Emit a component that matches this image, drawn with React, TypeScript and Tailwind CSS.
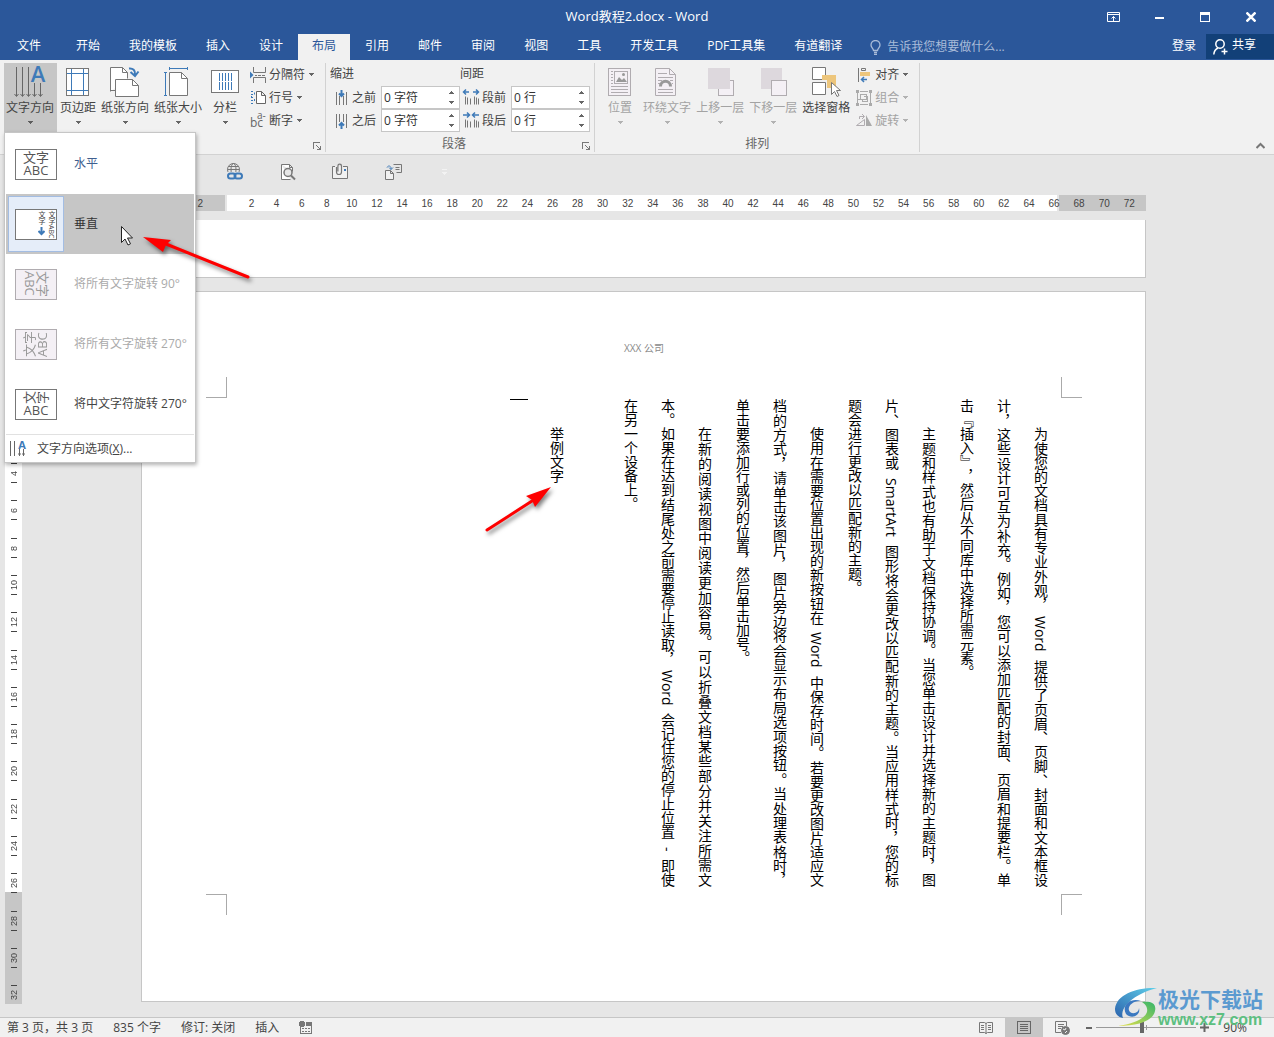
import type { ReactNode } from "react";

const BLUE = "#3e7ab8";

const tabs = ["开始", "我的模板", "插入", "设计", "布局", "引用", "邮件", "审阅", "视图", "工具", "开发工具", "PDF工具集", "有道翻译"];

const paragraphs = [
  "为使您的文档具有专业外观，Word 提供了页眉、页脚、封面和文本框设计，这些设计可互为补充。例如，您可以添加匹配的封面、页眉和提要栏。单击『插入』，然后从不同库中选择所需元素。",
  "主题和样式也有助于文档保持协调。当您单击设计并选择新的主题时，图片、图表或 SmartArt 图形将会更改以匹配新的主题。当应用样式时，您的标题会进行更改以匹配新的主题。",
  "使用在需要位置出现的新按钮在 Word 中保存时间。若要更改图片适应文档的方式，请单击该图片，图片旁边将会显示布局选项按钮。当处理表格时，单击要添加行或列的位置，然后单击加号。",
  "在新的阅读视图中阅读更加容易。可以折叠文档某些部分并关注所需文本。如果在达到结尾处之前需要停止读取，Word 会记住您的停止位置 - 即使在另一个设备上。",
];

const horizontalMarks = Array.from({ length: 36 }, (_, i) => (i + 1) * 2);
const verticalMarks = Array.from({ length: 16 }, (_, i) => (i + 1) * 2);

function Caret({ className = "" }: { className?: string }) {
  return (
    <svg width="5" height="3" viewBox="0 0 5 3" className={className} shapeRendering="crispEdges">
      <path d="M0 0h5v1H4v1H3v1H2V2H1V1H0z" fill="currentColor" />
    </svg>
  );
}

function BigButton({ label, icon, disabled, active, caret = true }: {
  label: string;
  icon: ReactNode;
  disabled?: boolean;
  active?: boolean;
  caret?: boolean;
}) {
  return (
    <button
      disabled={disabled}
      className={`flex h-[69px] min-w-10 flex-col items-center pt-[3px] pl-[2px] ${active ? "bg-[#c6c6c6] pr-[3px]" : "pr-[2px]"} ${disabled ? "text-[#a3a3a3]" : "text-[#444]"}`}
    >
      {icon}
      <span className="pt-px leading-[18px] whitespace-nowrap">{label}</span>
      {caret && <Caret className="mt-1 opacity-80" />}
    </button>
  );
}

function SmallButton({ label, icon, disabled }: { label: string; icon: ReactNode; disabled?: boolean }) {
  return (
    <button disabled={disabled} className={`flex h-[23px] items-center gap-[3px] ${disabled ? "text-[#a3a3a3]" : "text-[#444]"}`}>
      {icon}
      <span>{label}</span>
      <Caret className="ml-px opacity-80" />
    </button>
  );
}

function Group({ label, launcher, children }: { label: string; launcher?: boolean; children: ReactNode }) {
  return (
    <section className="mt-[3px] mb-[2px] flex flex-col border-r border-[#d2d2d2]">
      <div className="flex h-[69px]">{children}</div>
      <div className="flex h-5 items-end text-[#666]">
        <span className="flex-1 text-center leading-4">{label}</span>
        {launcher && (
          <button aria-label={`${label}设置`} className="h-3 w-3">
            <svg width="9" height="9" viewBox="0 0 9 9" fill="none" stroke="#777" shapeRendering="crispEdges">
              <path d="M.5 7V.5H7M3 3l4 4M7.500 4v3.500H4" />
            </svg>
          </button>
        )}
      </div>
    </section>
  );
}

function Spinner({ id, label, value, icon }: { id: string; label: string; value: string; icon: ReactNode }) {
  return (
    <div className="flex h-[23px] items-center">
      {icon}
      <label htmlFor={id} className="mr-[5px] whitespace-nowrap">{label}</label>
      <div className="flex h-[23px] w-[79px] border border-[#c6c6c6] bg-white">
        <input id={id} defaultValue={value} className="w-0 flex-1 bg-transparent pl-[2px] text-[#333] outline-none" />
        <div className="flex w-[15px] flex-col text-[#666]">
          <button aria-label={`${label}增加`} className="flex flex-1 items-center justify-center">
            <Caret className="rotate-180" />
          </button>
          <button aria-label={`${label}减少`} className="flex flex-1 items-center justify-center">
            <Caret />
          </button>
        </div>
      </div>
    </div>
  );
}

/* Ribbon icons */

const TextDirectionIcon = () => (
  <svg width="32" height="32" viewBox="0 0 32 32" fill="none" stroke="#666" className="overflow-visible">
    <path d="M2.500 1v29M8.500 1v29M14.500 1v29M20.500 17v13M26.500 17v13" />
    <path d="M.5 28l2 2.500 2-2.500M6.500 28l2 2.500 2-2.500M12.500 28l2 2.500 2-2.500M18.500 28l2 2.500 2-2.500M24.500 28l2 2.500 2-2.500" />
    <text x="24" y="16" textAnchor="middle" fontSize="22" fontWeight="600" fill={BLUE} stroke="none">A</text>
  </svg>
);

const MarginsIcon = () => (
  <svg width="32" height="32" viewBox="0 0 32 32" fill="none" shapeRendering="crispEdges">
    <rect x="4.500" y="2.500" width="22" height="27" fill="#fff" stroke="#777" />
    <path d="M9.500 3v26M21.500 3v26M5 7.500h21M5 24.500h21" stroke={BLUE} />
  </svg>
);

const OrientationIcon = () => (
  <svg width="32" height="32" viewBox="0 0 32 32" fill="#fff" stroke="#777">
    <path d="M1.500 25.500v-24h12l5 5v6M1.500 24.500h5" />
    <path d="M13.500 1.500v5h5" fill="none" />
    <path d="M6.500 13.500h17l6 6v11h-23z" />
    <path d="M23.500 13.500v6h6" fill="none" />
    <path d="M20 2.500c4-.5 6.500 2 6 6M21.500 6l4.500 4 3.500-4.500" fill="none" stroke={BLUE} strokeWidth="2" />
  </svg>
);

const SizeIcon = () => (
  <svg width="32" height="32" viewBox="0 0 32 32" fill="none" stroke="#777">
    <path d="M7.500 6.500h12l6 6v17h-18z" fill="#fff" />
    <path d="M19.500 6.500v6h6" />
    <path d="M7 2.500h18.500M7.500 1v3M25.500 1v3M3.500 6v23M2 6.500h3M2 29.500h3" stroke={BLUE} />
  </svg>
);

const ColumnsIcon = () => (
  <svg width="32" height="32" viewBox="0 0 32 32" fill="none" shapeRendering="crispEdges">
    <rect x="2.500" y="4.500" width="27" height="22" fill="#fff" stroke="#777" />
    <path d="M10.500 7v17M13.500 7v17M16.500 7v17M19.500 7v17M22.500 7v17" stroke={BLUE} strokeDasharray="8 1" />
  </svg>
);

const BreaksIcon = () => (
  <svg width="16" height="16" viewBox="0 0 16 16" fill="none" stroke="#777">
    <path d="M3.500 0v5.500h12V0M3.500 16v-5.500h12V16M5 8.500h2M8 8.500h3M12 8.500h3" />
    <path d="M0 4.500L3.500 8 0 11.500z" fill={BLUE} stroke="none" />
  </svg>
);

const LineNumberIcon = () => (
  <svg width="16" height="16" viewBox="0 0 16 16" fill="none" stroke="#666">
    <path d="M6.500 1.500h5l4 4v8h-9zM11.500 1.500v4h4" fill="#fff" />
    <path d="M1 1.500h2M1 4.500h3M1 7.500h3M1 10.500h3M1 13.500h3M4.500 2.500v2M1.500 6v2M4.500 9v2" stroke={BLUE} strokeDasharray="2 1" />
  </svg>
);

const HyphenIcon = () => (
  <svg width="16" height="16" viewBox="0 0 16 16" fill="#666" className="overflow-visible">
    <text x="0" y="14" fontSize="12">bc</text>
    <text x="7" y="6" fontSize="10">a-</text>
  </svg>
);

const IndentIcon = ({ up }: { up?: boolean }) => (
  <svg width="11" height="16" viewBox="0 0 11 16" fill="none" stroke="#777" className="mr-[5px] overflow-visible">
    <path d={up ? "M.5 1v14M3.500 1v8M7.500 1v8M10.500 1v14" : "M.5 2v13M3.500 6v9M7.500 6v9M10.500 2v13"} />
    <path d={up ? "M5.500 16v-6M3 12.500L5.500 10 8 12.500" : "M5.500 0v6M3 3.500L5.500 6 8 3.500"} stroke={BLUE} strokeWidth="2" />
  </svg>
);

const SpacingIcon = ({ inward }: { inward?: boolean }) => (
  <svg width="16" height="16" viewBox="0 1.500 16 16" fill="none" stroke="#777" className="mr-[3px] ml-[3px] overflow-visible">
    <path d="M2.500 8v8M4.500 9v7M7.500 10v6M11.500 8v8M13.500 9v7M15.500 10v6" />
    <path
      d={inward ? "M0 3.500h6M4 1l2.500 2.500L4 6M16 3.500h-6M12 1L9.500 3.500 12 6" : "M.5 3.500H6M3 1L.5 3.500 3 6M10 3.500h5.500M13 1l2.500 2.500L13 6"}
      stroke={BLUE}
      strokeWidth="1.500"
    />
  </svg>
);

const PositionIcon = () => (
  <svg width="32" height="32" viewBox="0 0 32 32" fill="none" stroke="#b0acb0">
    <rect x="4.500" y="2.500" width="22" height="27" fill="#f4f0f5" />
    <rect x="10.500" y="5.500" width="13" height="12" />
    <path d="M12 16l3-5 3 3 2-2 3 4z" fill="#999" stroke="none" />
    <circle cx="19.500" cy="8.500" r="1.500" fill="#999" stroke="none" />
    <path d="M7 5.500h2M7 8.500h2M7 11.500h2M7 14.500h2M7 17.500h2M7 20.500h17M7 23.500h17M7 26.500h17" />
  </svg>
);

const WrapIcon = () => (
  <svg width="32" height="32" viewBox="0 0 32 32" fill="none" stroke="#b0acb0">
    <path d="M4.500 2.500h14l6 6v21h-20z" fill="#f4f0f5" />
    <path d="M18.500 2.500v6h6M7 7.500h9M7 11.500h15M7 14.500h4M7 17.500h2M19 14.500h3M21 17.500h1M7 23.500h15M7 26.500h15" />
    <path d="M9.500 20.500c0-7 10-7 10 0" stroke="#999" strokeWidth="3" />
  </svg>
);

const ForwardIcon = () => (
  <svg width="32" height="32" viewBox="0 0 32 32">
    <rect x="14.500" y="14.500" width="15" height="15" fill="#f4f0f5" stroke="#b0acb0" />
    <path d="M4 2h22v21H4z" fill="#ddd8dd" />
  </svg>
);

const BackwardIcon = () => (
  <svg width="32" height="32" viewBox="0 0 32 32">
    <path d="M4 2h21v21H4z" fill="#ddd8dd" />
    <rect x="14.500" y="14.500" width="15" height="15" fill="#f4f0f5" stroke="#b0acb0" />
  </svg>
);

const SelectionIcon = () => (
  <svg width="32" height="32" viewBox="0 0 32 32" fill="#fff" stroke="#777">
    <path d="M12 9h14v13h-9v-8h-5z" fill="#edc67c" stroke="none" />
    <path d="M2.500 1.500h13v12h-13zM2.500 16.500h13v12h-13z" />
    <path d="M12 9h14v5H12z" fill="#edc67c" stroke="none" />
    <path d="M21.500 16.500v12l3-3 2.500 5 2-1-2.500-5h4z" />
  </svg>
);

const AlignIcon = () => (
  <svg width="16" height="16" viewBox="0 0 16 16" fill="none" stroke="#777">
    <path d="M2.500 1v14M5.500 1.500h4v2h-4z" />
    <path d="M4 5h10v4H4z" fill="#edc67c" stroke="none" />
    <path d="M5 12.500h6M8 10l-2.500 2.500L8 15" stroke={BLUE} strokeWidth="1.500" />
  </svg>
);

const GroupIcon = () => (
  <svg width="16" height="16" viewBox="0 0 16 16" fill="none" stroke="#aaa" shapeRendering="crispEdges">
    <path d="M1.500 3v10M14.500 3v10M4 1.500h8M4 14.500h8M1.500 9.500h3M4.500 4.500h6v5h-6zM7.500 6.500h4v5h-5v-2" />
    <path d="M0 0h3v3H0zM13 0h3v3h-3zM0 13h3v3H0zM13 13h3v3h-3z" fill="#aaa" stroke="none" />
  </svg>
);

const RotateIcon = () => (
  <svg width="16" height="16" viewBox="0 0 16 16" fill="none" stroke="#b0acb0">
    <path d="M10 2v11h6z" fill="#aaa" stroke="none" />
    <path d="M.5 12.500h8v-6zM3.500 6V3.500H8M6 1l2.500 2.500L6 6" />
  </svg>
);

/* Quick access toolbar */
const quickTools = [
  {
    name: "超链接",
    icon: (
      <>
        <circle cx="7.500" cy="6.500" r="6" />
        <ellipse cx="7.500" cy="6.500" rx="2.500" ry="6" />
        <path d="M1.500 6.500h12M2.500 3.500h10M2.500 9.500h10" />
        <rect x="1" y="9" width="16" height="9" fill="#e6e6e6" stroke="none" />
        <rect x="2" y="10.500" width="7.500" height="5" rx="2.500" stroke={BLUE} strokeWidth="2" />
        <rect x="8.500" y="10.500" width="7.500" height="5" rx="2.500" stroke={BLUE} strokeWidth="2" />
      </>
    ),
  },
  {
    name: "打印预览",
    icon: (
      <>
        <path d="M2.500 1.500h8l3 3v4M2.500 1.500v15h9M10.500 1.500v3h3" fill="#fff" />
        <circle cx="9" cy="9.500" r="4" fill="#e6e6e6" strokeWidth="1.500" />
        <path d="M12 12.500l4 4" strokeWidth="2" />
      </>
    ),
  },
  {
    name: "附件",
    icon: (
      <>
        <path d="M3 3.500H.5v12h15v-12H11" fill="#f1f1f1" />
        <path d="M4.500 4v5a2.500 2.500 0 0 0 5 0V3a1.800 1.800 0 0 0-3.600 0v5.500" strokeWidth="1.200" />
        <path d="M12 6h2v2h-2z" fill={BLUE} stroke="none" />
      </>
    ),
  },
  {
    name: "粘贴",
    icon: (
      <>
        <path d="M8.500 1.500h8v8h-5M10.500 4.500h4M10.500 6.500h4" />
        <path d="M.5 7.500h5l3 3v6h-8zM5.500 7.500v3h3" fill="#f1f1f1" />
        <path d="M2 4.500c1-2 3-2 4 0v2M4 4.500l2 2 2-2" stroke={BLUE} />
      </>
    ),
  },
];

const previewBox = "flex h-[31px] w-[42px] shrink-0 items-center justify-center border leading-[13px] text-[13px]";

const directions = [
  {
    label: "水平",
    tone: "text-[#3f5f8f]",
    preview: (
      <span className={`${previewBox} flex-col border-[#777] bg-white text-[#555]`}>
        <span>文字</span>
        <span>ABC</span>
      </span>
    ),
  },
  {
    label: "垂直",
    tone: "text-[#333]",
    selected: true,
    preview: (
      <span className="flex h-[31px] w-[42px] shrink-0 justify-end gap-[3px] border border-[#777] bg-white pt-px pr-px text-[7px] leading-[7px] text-[#444]">
        <span className="flex flex-col items-center">
          <span className="[writing-mode:vertical-rl]">文字</span>
          <svg width="7" height="9" viewBox="0 0 7 9" fill="none" stroke={BLUE} strokeWidth="2" className="mt-[2px]">
            <path d="M3.500 0v7M.5 4l3 3 3-3" />
          </svg>
        </span>
        <span className="[writing-mode:vertical-rl]">文字ABC</span>
      </span>
    ),
  },
  {
    label: "将所有文字旋转 90°",
    tone: "text-[#aaa]",
    disabled: true,
    preview: (
      <span className={`${previewBox} border-[#b0acb0] bg-[#f4f0f5] text-[#999]`}>
        <span className="[text-orientation:sideways] [writing-mode:vertical-rl]">文字<br />ABC</span>
      </span>
    ),
  },
  {
    label: "将所有文字旋转 270°",
    tone: "text-[#aaa]",
    disabled: true,
    preview: (
      <span className={`${previewBox} border-[#b0acb0] bg-[#f4f0f5] text-[#999]`}>
        <span className="rotate-180 [text-orientation:sideways] [writing-mode:vertical-rl]">文字<br />ABC</span>
      </span>
    ),
  },
  {
    label: "将中文字符旋转 270°",
    tone: "text-[#444]",
    preview: (
      <span className={`${previewBox} flex-col border-[#777] bg-white text-[#555]`}>
        <span className="flex">
          <span className="-rotate-90">文</span>
          <span className="-rotate-90">字</span>
        </span>
        <span>ABC</span>
      </span>
    ),
  },
];

function DirectionMenu() {
  return (
    <div className="absolute top-[132px] left-1 z-10 w-[192px] border border-[#c6c6c6] bg-white pt-px shadow-[1px_2px_4px_rgba(0,0,0,0.3)]">
      {directions.map((d) => (
        <button
          key={d.label}
          disabled={d.disabled}
          className={`mx-px flex h-[60px] w-[188px] items-center text-left ${d.tone} ${d.selected ? "bg-[#c6c6c6]" : ""}`}
        >
          <span
            className={`ml-[2px] flex h-14 w-14 items-center justify-center border ${d.selected ? "border-[#a3bde3] bg-[#e5edf9]" : "border-transparent"}`}
          >
            {d.preview}
          </span>
          <span className="ml-[10px] whitespace-nowrap">{d.label}</span>
        </button>
      ))}
      <button className="mx-px flex h-[28px] w-[188px] items-center border-t border-[#e1e1e1] text-[#444]">
        <svg width="16" height="17" viewBox="0 0 16 17" fill="none" stroke="#666" className="ml-1 overflow-visible">
          <path d="M.5 1v15M4.500 1v15M9.500 9v7M13.500 9v7M8 14h3M12 14h3" />
          <text x="12" y="8.500" textAnchor="middle" fontSize="11" fontWeight="700" fill={BLUE} stroke="none">A</text>
        </svg>
        <span className="ml-[11px]">文字方向选项(<u>X</u>)...</span>
      </button>

      {/* Pointer and the arrow calling out the vertical option */}
      <svg width="14" height="20" viewBox="0 0 14 20" className="absolute top-[93px] left-[116px]">
        <path d="M.5.5v16l3.500-3.500 3 6 2.500-1.200-3-5.800h5z" fill="#fff" stroke="#222" />
      </svg>
      <svg width="120" height="60" viewBox="0 0 120 60" className="absolute top-[98px] left-[135px] drop-shadow-[2px_3px_2px_rgba(0,0,0,0.5)]">
        <path d="M26 13L108 46" stroke="#fe0000" strokeWidth="3" strokeLinecap="round" />
        <path d="M3 6l28 3-5 5-3 7z" fill="#fe0000" />
      </svg>
    </div>
  );
}

function Ribbon() {
  return (
    <div className="flex border-b border-[#d2d2d2] bg-[#f1f1f1] pl-1 text-[#444]">
      <Group label="" launcher>
        <div className="flex gap-px">
          <BigButton label="文字方向" icon={<TextDirectionIcon />} active />
          <BigButton label="页边距" icon={<MarginsIcon />} />
          <BigButton label="纸张方向" icon={<OrientationIcon />} />
          <BigButton label="纸张大小" icon={<SizeIcon />} />
          <BigButton label="分栏" icon={<ColumnsIcon />} />
        </div>
        <div className="mr-[11px] ml-[5px] flex flex-col">
          <SmallButton label="分隔符" icon={<BreaksIcon />} />
          <SmallButton label="行号" icon={<LineNumberIcon />} />
          <SmallButton label="断字" icon={<HyphenIcon />} />
        </div>
      </Group>

      <Group label="段落" launcher>
        <div className="ml-1 flex flex-col">
          <h2 className="h-[23px] leading-[21px]">缩进</h2>
          <div className="pl-[6px]">
            <Spinner id="indent-left" label="之前" value="0 字符" icon={<IndentIcon />} />
            <Spinner id="indent-right" label="之后" value="0 字符" icon={<IndentIcon up />} />
          </div>
        </div>
        <div className="mr-1 flex flex-col">
          <h2 className="h-[23px] leading-[21px]">间距</h2>
          <Spinner id="space-before" label="段前" value="0 行" icon={<SpacingIcon />} />
          <Spinner id="space-after" label="段后" value="0 行" icon={<SpacingIcon inward />} />
        </div>
      </Group>

      <Group label="排列">
        <div className="ml-[5px] flex gap-px">
          <BigButton label="位置" icon={<PositionIcon />} disabled />
          <BigButton label="环绕文字" icon={<WrapIcon />} disabled />
          <BigButton label="上移一层" icon={<ForwardIcon />} disabled />
          <BigButton label="下移一层" icon={<BackwardIcon />} disabled />
          <BigButton label="选择窗格" icon={<SelectionIcon />} caret={false} />
        </div>
        <div className="mr-[11px] ml-1 flex flex-col">
          <SmallButton label="对齐" icon={<AlignIcon />} />
          <SmallButton label="组合" icon={<GroupIcon />} disabled />
          <SmallButton label="旋转" icon={<RotateIcon />} disabled />
        </div>
      </Group>

      <button aria-label="折叠功能区" className="mr-[9px] mb-1 ml-auto self-end">
        <svg width="9" height="8" viewBox="0 0 9 8" fill="none" stroke="#777" strokeWidth="2">
          <path d="M.5 6L4.500 2l4 4" />
        </svg>
      </button>
    </div>
  );
}

// Latin words get extra room on both sides, as in East Asian typesetting
function MixedText({ text }: { text: string }) {
  return (
    <>
      {text.split(/([A-Za-z]+|-)/).map((part, i) =>
        i % 2 ? <span key={i} className="mx-1">{part}</span> : part
      )}
    </>
  );
}

function Page() {
  return (
    <article className="relative mt-[13px] flex flex-col border border-[#c6c6c6] bg-white pr-[63px] pb-[86px] pl-16">
      <header className="flex h-[85px] items-center justify-center pt-[28px] text-[10px] text-[#8a8a8a]">XXX 公司</header>
      <div className="flex h-[21px] justify-between">
        <span className="w-[21px] border-r border-b border-[#aaa]" />
        <span className="w-[21px] border-b border-l border-[#aaa]" />
      </div>
      <div className="mr-[23px] ml-[22px] flex h-[496px] flex-col pt-px">
        <div className="flex h-[488px] w-full flex-col gap-px text-justify text-[14px] leading-[37px] text-black [text-spacing-trim:space-all] [writing-mode:vertical-rl]">
          {paragraphs.map((p) => (
            <p key={p} className="h-[488px] indent-[28px]"><MixedText text={p} /></p>
          ))}
          <p className="w-[35px]" />
          <p className="indent-[28px]">举例文字</p>
          <p className="w-[37px] pr-[9px] pl-[9px]">
            <span className="block h-px w-[18px] bg-black" />
          </p>
        </div>
      </div>
      <div className="flex h-[21px] justify-between">
        <span className="w-[21px] border-t border-r border-[#aaa]" />
        <span className="w-[21px] border-t border-l border-[#aaa]" />
      </div>

      {/* Arrow calling out the sample text */}
      <svg width="76" height="56" viewBox="0 0 76 56" className="absolute top-[193px] left-[342px] drop-shadow-[2px_3px_2px_rgba(0,0,0,0.5)]">
        <path d="M3 45L48 16" stroke="#fe0000" strokeWidth="3" strokeLinecap="round" />
        <path d="M67 2L42 11l6 4 3 7z" fill="#fe0000" />
      </svg>
    </article>
  );
}

function Watermark() {
  return (
    <div className="pointer-events-none absolute right-[11px] bottom-[9px] z-20 flex items-center">
      <svg width="44" height="42" viewBox="0 0 44 42" fill="none">
        <defs>
          <linearGradient id="swoosh-blue" x1="0" y1="1" x2="1" y2="0">
            <stop offset="0" stopColor="#2c63ad" />
            <stop offset="1" stopColor="#5fd0ea" />
          </linearGradient>
          <linearGradient id="swoosh-green" x1="0" y1="1" x2="1" y2="0">
            <stop offset="0" stopColor="#e6e04a" />
            <stop offset="1" stopColor="#35b56a" />
          </linearGradient>
        </defs>
        <path d="M43 2C24 1 2 8 1 23c0 5 3 8 8 9C5 21 20 8 43 2z" fill="url(#swoosh-blue)" />
        <path d="M12 28c-5-9 5-17 15-13-9-1-15 7-11 11 4 3 9 0 9-4 2 7-7 12-13 6z" fill="#3a78c0" />
        <path d="M28 16c7-1 15 0 13 9-2 10-17 15-37 15 14-2 27-7 29-14 1-5-2-8-5-10z" fill="url(#swoosh-green)" />
      </svg>
      <div className="flex flex-col">
        <span className="text-[21px] leading-[26px] font-bold text-[#5b9ad0]">极光下载站</span>
        <span className="font-['Liberation_Sans',sans-serif] text-[16px] leading-4 font-bold text-[#5cbf80]">www.xz7.com</span>
      </div>
    </div>
  );
}

function StatusBar() {
  return (
    <footer className="flex h-5 shrink-0 items-center border-t border-[#c6c6c6] bg-[#f1f1f1] pr-[27px] pl-[7px] text-[#444]">
      <div className="flex items-center gap-5 whitespace-nowrap">
        <span>第 3 页，共 3 页</span>
        <span>835 个字</span>
        <span>修订: 关闭</span>
        <span>插入</span>
        <button aria-label="录制宏">
          <svg width="13" height="13" viewBox="0 0 13 13" fill="none" stroke="#777" shapeRendering="crispEdges">
            <path d="M1.500 6v6.500h11V2M3 7.500h2M6 7.500h2M9 7.500h2M3 10.500h2M6 10.500h2M9 10.500h2" />
            <path d="M7 1h6v4H7z" fill="#777" stroke="none" />
            <circle cx="3" cy="3" r="3" fill="#777" stroke="none" />
          </svg>
        </button>
      </div>
      <div className="ml-auto flex h-full items-center">
        <button aria-label="阅读视图" className="mr-3">
          <svg width="14" height="13" viewBox="0 0 14 13" fill="none" stroke="#777">
            <path d="M7 2.500L5.500 1.500h-5v10h5L7 12.500l1.500-1h5v-10h-5zM7 2v11M2 4.500h3M2 6.500h3M2 8.500h3M9 4.500h3M9 6.500h3M9 8.500h3" />
          </svg>
        </button>
        <button aria-label="页面视图" className="flex h-full w-[38px] items-center justify-center bg-[#c6c6c6]">
          <svg width="14" height="13" viewBox="0 0 14 13" fill="none" stroke="#666" shapeRendering="crispEdges">
            <path d="M.5.5h13v12H.5zM3 3.500h8M3 5.500h8M3 7.500h8M3 9.500h8" />
          </svg>
        </button>
        <button aria-label="Web 版式视图" className="mr-4 ml-3">
          <svg width="15" height="14" viewBox="0 0 15 14" fill="none" stroke="#777">
            <path d="M6 11.500H.5V.5h11V5M3 3.500h6M3 5.500h5M3 7.500h3" />
            <circle cx="10.500" cy="9.500" r="4" fill="#777" />
            <path d="M8 8l2 1 1-2M10 12l2-2" stroke="#f1f1f1" />
          </svg>
        </button>
        <button aria-label="缩小" className="mr-1 h-[2px] w-[6px] bg-[#666]" />
        <div className="relative flex items-center">
          <span className="absolute left-[50px] h-[5px] w-px bg-[#999]" />
          <input
            type="range"
            aria-label="显示比例"
            defaultValue={45}
            className="relative h-3 w-[100px] appearance-none bg-transparent [&::-webkit-slider-runnable-track]:h-px [&::-webkit-slider-runnable-track]:bg-[#999] [&::-webkit-slider-thumb]:-mt-[5px] [&::-webkit-slider-thumb]:h-[11px] [&::-webkit-slider-thumb]:w-1 [&::-webkit-slider-thumb]:appearance-none [&::-webkit-slider-thumb]:bg-[#666]"
          />
        </div>
        <button aria-label="放大" className="mr-[14px] ml-1">
          <svg width="9" height="9" viewBox="0 0 9 9" stroke="#666" strokeWidth="2">
            <path d="M4.500 0v9M0 4.500h9" />
          </svg>
        </button>
        <span>90%</span>
      </div>
    </footer>
  );
}

export default function App() {
  return (
    <div className="relative flex h-screen flex-col overflow-hidden bg-[#e6e6e6] font-['Open_Sans','Noto_Sans_CJK_SC',sans-serif] text-[12px]">
      {/* Title bar */}
      <div className="flex h-[34px] shrink-0 items-center bg-[#2b579a] text-white">
        <div className="flex-1" />
        <h1 className="text-[13px]">Word教程2.docx - Word</h1>
        <div className="flex flex-1 justify-end">
          <button aria-label="功能区显示选项" className="flex w-[46px] justify-center">
            <svg width="13" height="10" viewBox="0 0 13 10" fill="none" stroke="#fff">
              <path d="M.5.5h12v9H.5zM.5 2.500h12M6.500 9V4.500M4.500 6.500l2-2 2 2" />
            </svg>
          </button>
          <button aria-label="最小化" className="flex w-[46px] items-center justify-center">
            <span className="mt-[2px] h-[2px] w-[9px] bg-white" />
          </button>
          <button aria-label="最大化" className="flex w-[46px] items-center justify-center">
            <span className="h-[10px] w-[10px] border border-t-[3px] border-white" />
          </button>
          <button aria-label="关闭" className="flex w-[46px] items-center justify-center">
            <svg width="10" height="10" viewBox="0 0 10 10" stroke="#fff" strokeWidth="2.500">
              <path d="M.5.5l9 9M9.500.5l-9 9" />
            </svg>
          </button>
        </div>
      </div>

      {/* Tabs */}
      <div className="flex h-[26px] shrink-0 bg-[#2b579a] text-white">
        <nav className="flex gap-px whitespace-nowrap">
          <button className="w-[61px] pr-[3px] pb-[2px]">文件</button>
          {tabs.map((t) => (
            <button key={t} className={`px-[14px] pb-[2px] ${t === "布局" ? "bg-[#f1f1f1] text-[#2b579a]" : ""}`}>
              {t}
            </button>
          ))}
        </nav>
        <label className="ml-[14px] flex flex-1 items-center gap-[6px]">
          <svg width="11" height="15" viewBox="0 0 11 15" fill="none" stroke="#a9bcd9">
            <path d="M3.500 10.500c0-2-2.500-3-2.500-5.500a4.500 4.500 0 0 1 9 0c0 2.500-2.500 3.500-2.500 5.500zM4 12.500h3M4 14.500h3" strokeWidth="1.300" />
          </svg>
          <input placeholder="告诉我您想要做什么..." aria-label="告诉我您想要做什么" className="w-[140px] outline-none placeholder:text-[#a9bcd9]" />
        </label>
        <a href="#login" className="pt-[3px] pr-[10px]">登录</a>
        <button className="mb-px flex w-[68px] items-center gap-1 bg-[#124078] pl-[7px]">
          <svg width="15" height="16" viewBox="0 0 15 16" fill="none" stroke="#fff" strokeWidth="1.500">
            <circle cx="7" cy="5" r="4.200" />
            <path d="M.8 15.500c.2-3 2-5.500 4.200-6.500M11.500 9.500v6M8.500 12.500h6" />
          </svg>
          <span className="pb-[3px]">共享</span>
        </button>
      </div>

      <Ribbon />

      {/* Quick access */}
      <div className="flex h-10 shrink-0 items-center gap-[35px] pb-[7px] pl-[226px]">
        {quickTools.map((q) => (
          <button key={q.name} aria-label={q.name}>
            <svg width="18" height="18" viewBox="0 0 18 18" fill="none" stroke="#777">{q.icon}</svg>
          </button>
        ))}
        <button aria-label="自定义快速访问工具栏" className="ml-1 flex flex-col items-center gap-[2px] text-[#f3f3f3]">
          <span className="h-px w-[5px] bg-[#f3f3f3]" />
          <Caret />
        </button>
      </div>

      {/* Document area */}
      <main className="flex min-h-0 flex-1 overflow-hidden">
        <div className="w-[22px] shrink-0 pt-[222px] pl-[5px]">
          <div className="flex h-[587px] flex-col overflow-hidden bg-[linear-gradient(to_bottom,#fff_475px,#c6c6c6_475px)] font-['Liberation_Sans',sans-serif] text-[9px] text-[#444]">
            <div className="flex h-[597px] shrink-0 flex-col">
              {verticalMarks.map((n) => (
                <span key={n} className="flex flex-1 flex-col items-center justify-center">
                  <span className="h-px w-[6px] shrink-0 bg-[#444]" />
                  <span className="flex h-[18px] rotate-180 items-center justify-center leading-[10px] [writing-mode:vertical-rl]">{n}</span>
                  <span className="h-px w-[6px] shrink-0 bg-[#444]" />
                </span>
              ))}
            </div>
          </div>
        </div>
        <div className="flex flex-1 justify-center pr-[9px]">
          <div className="flex w-[1005px] flex-col">
            <div className="flex h-4 shrink-0 items-center bg-[linear-gradient(to_right,#c6c6c6_84px,#e6e6e6_84px,#e6e6e6_86px,#fff_86px,#fff_916px,#e6e6e6_916px,#e6e6e6_918px,#c6c6c6_918px)] pr-1 font-['Liberation_Sans',sans-serif] text-[10px] text-[#444]">
              <span className="w-[98px] pr-9 text-right">2</span>
              {horizontalMarks.map((n) => (
                <span key={n} className="w-0 flex-1 text-center">{n}</span>
              ))}
            </div>
            <div className="mt-[9px] h-[58px] shrink-0 border border-t-0 border-[#c6c6c6] bg-white" />
            <Page />
          </div>
        </div>
      </main>

      <StatusBar />
      <DirectionMenu />
      <Watermark />
    </div>
  );
}
